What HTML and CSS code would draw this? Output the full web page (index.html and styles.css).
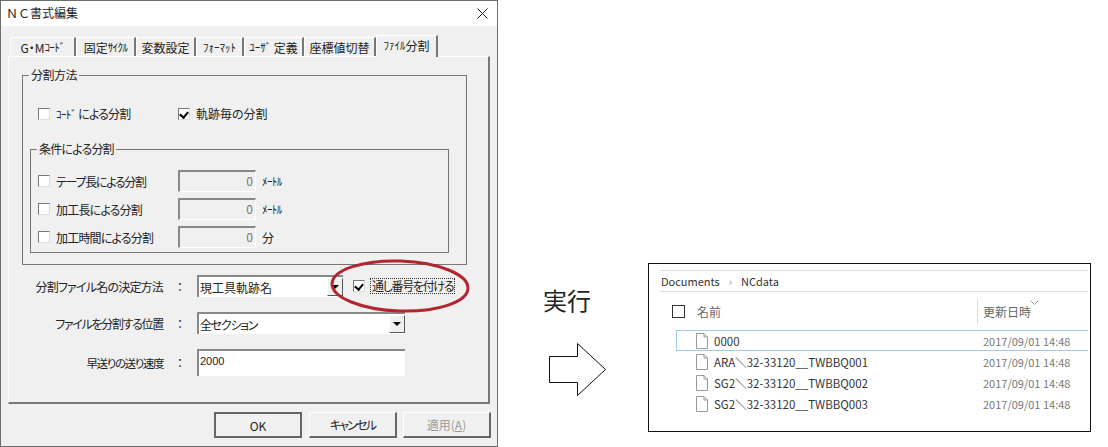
FILE: index.html
```html
<!DOCTYPE html>
<html lang="ja">
<head>
    <meta charset="UTF-8">
    <title>NC書式編集</title>
    <link rel="stylesheet" href="styles.css">
</head>
<body>
    <div class="dialog">
        <div class="titlebar">
            <span class="title">ＮＣ書式編集</span>
            <svg class="close" width="11" height="11" viewBox="0 0 11 11"><path d="M0.5 0.5L10.5 10.5M10.5 0.5L0.5 10.5" stroke="#222" fill="none"/></svg>
        </div>
        <div class="dialog-body">
            <div class="tabs">
                <div class="tab tab-gm">G・M<span class="narrow">ｺｰﾄﾞ</span></div>
                <div class="tab tab-cycle">固定<span class="narrow">ｻｲｸﾙ</span></div>
                <div class="tab tab-var">変数設定</div>
                <div class="tab tab-format"><span class="narrow wide-kana">ﾌｫｰﾏｯﾄ</span></div>
                <div class="tab tab-user"><span class="narrow wide-kana">ﾕｰｻﾞ</span> 定義</div>
                <div class="tab tab-coord">座標値切替</div>
                <div class="tab tab-active"><span class="narrow wide-kana">ﾌｧｲﾙ</span>分割</div>
            </div>
            <div class="panel">
                <fieldset class="group group-method">
                    <legend class="tight-0">分割方法</legend>
                    <div class="check-row">
                        <label class="check check-code"><span class="box"></span><span class="tight-1"><span class="narrow">ｺｰﾄﾞ</span> による分割</span></label>
                        <label class="check"><span class="box checked"></span><span>軌跡毎の分割</span></label>
                    </div>
                    <fieldset class="group group-cond">
                        <legend class="tight-1">条件による分割</legend>
                        <div class="cond-row">
                            <label class="check cond-label"><span class="box"></span><span class="tight-2">テープ長による分割</span></label>
                            <div class="num">0</div><span class="unit narrow">ﾒｰﾄﾙ</span>
                        </div>
                        <div class="cond-row">
                            <label class="check cond-label"><span class="box"></span><span class="tight-1">加工長による分割</span></label>
                            <div class="num">0</div><span class="unit narrow">ﾒｰﾄﾙ</span>
                        </div>
                        <div class="cond-row">
                            <label class="check cond-label"><span class="box"></span><span class="tight-1">加工時間による分割</span></label>
                            <div class="num">0</div><span class="unit">分</span>
                        </div>
                    </fieldset>
                </fieldset>
                <div class="form-row row-name">
                    <span class="form-label tight-1">分割ファイル名の決定方法</span><span class="colon">：</span>
                    <div class="combo combo-short"><span>現工具軌跡名</span><span class="arrow-btn"><i></i></span></div>
                    <label class="check check-serial"><span class="box checked"></span><span class="focus-text tight-2">通し番号を付ける</span></label>
                </div>
                <div class="form-row row-pos">
                    <span class="form-label tight-2">ファイルを分割する位置</span><span class="colon">：</span>
                    <div class="combo combo-long"><span class="tight-2">全セクション</span><span class="arrow-btn"><i></i></span></div>
                </div>
                <div class="form-row row-speed">
                    <span class="form-label tight-4">早送りの送り速度</span><span class="colon">：</span>
                    <div class="speed-input">2000</div>
                </div>
                <svg class="ring" width="142" height="56" viewBox="0 0 142 56"><ellipse cx="71" cy="28" rx="68" ry="25" transform="rotate(2 71 28)" fill="none" stroke="#b2262f" stroke-width="3"/></svg>
            </div>
            <div class="buttons">
                <div class="btn btn-default">OK</div>
                <div class="btn tight-3">キャンセル</div>
                <div class="btn btn-off">適用(<u>A</u>)</div>
            </div>
        </div>
    </div>

    <div class="middle">
        <div class="run-label">実行</div>
        <svg class="big-arrow" width="58" height="54" viewBox="0 0 58 54"><path d="M0.5 13.5H28.5V0.5L56.5 26.5L28.5 52.5V39.5H0.5Z" fill="#fff" stroke="#111"/></svg>
    </div>

    <div class="explorer">
        <div class="breadcrumb"><span>Documents</span><span class="crumb-sep">›</span><span>NCdata</span></div>
        <div class="list-head">
            <span class="head-box"></span>
            <span class="head-name">名前</span>
            <span class="head-date">更新日時<svg class="sort" width="9" height="5" viewBox="0 0 9 5"><path d="M0.5 0.5L4.5 4.5L8.5 0.5" stroke="#999" fill="none"/></svg></span>
        </div>
        <div class="file file-selected">
            <svg class="doc" width="12" height="16" viewBox="0 0 12 16"><path d="M0.5 0.5H8L11.5 4V15.5H0.5ZM8 0.5V4H11.5" fill="#fff" stroke="#999"/></svg>
            <span class="file-name">0000</span><span class="file-date">2017/09/01 14:48</span>
        </div>
        <div class="file">
            <svg class="doc" width="12" height="16" viewBox="0 0 12 16"><path d="M0.5 0.5H8L11.5 4V15.5H0.5ZM8 0.5V4H11.5" fill="#fff" stroke="#999"/></svg>
            <span class="file-name">ARA＼32-33120__TWBBQ001</span><span class="file-date">2017/09/01 14:48</span>
        </div>
        <div class="file">
            <svg class="doc" width="12" height="16" viewBox="0 0 12 16"><path d="M0.5 0.5H8L11.5 4V15.5H0.5ZM8 0.5V4H11.5" fill="#fff" stroke="#999"/></svg>
            <span class="file-name">SG2＼32-33120__TWBBQ002</span><span class="file-date">2017/09/01 14:48</span>
        </div>
        <div class="file">
            <svg class="doc" width="12" height="16" viewBox="0 0 12 16"><path d="M0.5 0.5H8L11.5 4V15.5H0.5ZM8 0.5V4H11.5" fill="#fff" stroke="#999"/></svg>
            <span class="file-name">SG2＼32-33120__TWBBQ003</span><span class="file-date">2017/09/01 14:48</span>
        </div>
    </div>
</body>
</html>
```

FILE: styles.css
```css
* {
    box-sizing: border-box;
}
body {
    margin: 0;
    width: 1108px;
    height: 447px;
    overflow: hidden;
    background-color: #fff;
    display: flex;
    align-items: flex-start;
    font-family: "Noto Sans CJK JP", "Liberation Sans", sans-serif;
    font-size: 12px;
    color: #222;
}
.narrow {
    font-size: 11px;
    letter-spacing: -0.6px;
}
.wide-kana {
    letter-spacing: 0;
}
.tight-0 { letter-spacing: -0.5px; }
.tight-1 { letter-spacing: -0.8px; }
.tight-2 { letter-spacing: -1.3px; }
.tight-3 { letter-spacing: -1.8px; }
.tight-4 { letter-spacing: -1.4px; font-size: 11.5px; }

/* dialog */
.dialog {
    width: 498px;
    height: 447px;
    border: 1px solid #6d6d6d;
    background-color: #f0f0f0;
    flex-shrink: 0;
}
.titlebar {
    height: 25px;
    background-color: #fff;
    display: flex;
    align-items: center;
    justify-content: space-between;
    padding: 0 9px 0 5px;
}
.title {
    margin-top: -2px;
}
.dialog-body {
    padding: 8px 6px 0 7px;
    font-feature-settings: "palt";
}
.tabs {
    display: flex;
    height: 22px;
    padding-left: 2px;
    align-items: flex-end;
    position: relative;
    z-index: 1;
}
.tab {
    height: 19px;
    border: 1px solid #fff;
    border-right: 2px solid #777;
    border-bottom: none;
    background-color: #f0f0f0;
    display: flex;
    align-items: center;
    justify-content: center;
    white-space: pre;
}
.tab-gm { width: 66px; }
.tab-cycle { width: 60px; }
.tab-var { width: 60px; }
.tab-format { width: 48px; }
.tab-user { width: 60px; }
.tab-coord { width: 72px; }
.tab-active {
    width: 62px;
    height: 22px;
    margin-bottom: -1px;
    padding-bottom: 3px;
}
.panel {
    position: relative;
    width: 482px;
    height: 348px;
    border: 1px solid #fff;
    border-right: 2px solid #777;
    border-bottom: 2px solid #777;
    padding: 11px 0 0 13px;
}

/* groups */
.group {
    margin: 0;
    padding: 0;
    border: 1px solid #777;
}
.group legend {
    margin-left: -1px;
    padding: 0 2px;
    line-height: 14px;
}
.group-method {
    width: 445px;
    height: 197px;
    padding: 23px 0 0 7px;
}
.check-row {
    display: flex;
    padding-left: 8px;
}
.check {
    display: flex;
    align-items: center;
    gap: 6px;
    white-space: nowrap;
}
.check-code {
    width: 140px;
}
.box {
    width: 12px;
    height: 12px;
    background-color: #fff;
    border: 1px solid #777;
    border-right-color: #ddd;
    border-bottom-color: #ddd;
    flex-shrink: 0;
    position: relative;
}
.box.checked::after {
    content: "";
    position: absolute;
    left: 2px;
    top: 1px;
    width: 4px;
    height: 6px;
    border: solid #000;
    border-width: 0 2px 2px 0;
    transform: rotate(40deg);
}
.group-cond {
    width: 419px;
    height: 111px;
    margin-top: 20px;
    padding: 14px 0 0 7px;
}
.cond-row {
    display: flex;
    align-items: center;
    height: 22px;
    margin-bottom: 6px;
}
.cond-label {
    width: 140px;
}
.num {
    width: 78px;
    height: 22px;
    background-color: #f0f0f0;
    border: 1px solid #fff;
    border-top: 2px solid #888;
    border-left: 2px solid #888;
    color: #777;
    text-align: right;
    padding-right: 2px;
    line-height: 18px;
}
.unit {
    margin-left: 6px;
}

/* form rows */
.form-row {
    display: flex;
    align-items: center;
}
.row-name {
    margin-top: 10px;
    height: 22px;
}
.row-pos {
    margin-top: 15px;
    height: 22px;
}
.row-speed {
    margin-top: 15px;
    height: 27px;
}
.form-label {
    width: 141px;
    text-align: right;
    white-space: nowrap;
}
.colon {
    width: 34px;
    text-align: center;
}
.combo {
    height: 22px;
    background-color: #fff;
    border-top: 2px solid #888;
    border-left: 2px solid #888;
    display: flex;
    align-items: center;
    justify-content: space-between;
    padding-left: 1px;
}
.combo-short { width: 146px; }
.combo-long { width: 208px; }
.arrow-btn {
    width: 16px;
    height: 18px;
    background-color: #f0f0f0;
    border: 1px solid #fff;
    border-right-color: #555;
    border-bottom-color: #555;
    display: flex;
    align-items: center;
    justify-content: center;
}
.arrow-btn i {
    width: 0;
    height: 0;
    border: 4px solid transparent;
    border-top: 4px solid #000;
    border-bottom: none;
}
.check-serial {
    margin-left: 10px;
    gap: 5px;
}
.focus-text {
    border: 1px dotted #333;
    padding: 0 1px;
    line-height: 14px;
}
.speed-input {
    width: 208px;
    height: 27px;
    background-color: #fff;
    border-top: 2px solid #888;
    border-left: 2px solid #888;
    padding: 2px 0 0 1px;
    font-family: "Liberation Sans", sans-serif;
    font-size: 11px;
    line-height: 16px;
}
.ring {
    position: absolute;
    left: 320px;
    top: 201px;
}

/* bottom buttons */
.buttons {
    display: flex;
    justify-content: flex-end;
    gap: 6px;
    margin-top: 8px;
}
.btn {
    width: 88px;
    height: 26px;
    background-color: #f0f0f0;
    border: 1px solid #fff;
    border-right: 2px solid #666;
    border-bottom: 2px solid #666;
    display: flex;
    align-items: center;
    justify-content: center;
}
.btn-default {
    border: 2px solid #666;
    margin-right: 1px;
}
.btn-off {
    color: #999;
}

/* middle */
.middle {
    width: 150px;
    padding: 286px 0 0 45px;
    flex-shrink: 0;
}
.run-label {
    font-size: 24px;
    line-height: 28px;
}
.big-arrow {
    display: block;
    margin: 29px 0 0 6px;
}

/* explorer */
.explorer {
    margin-top: 263px;
    width: 443px;
    height: 169px;
    border: 1px solid #111;
    padding: 6px 2px 0 11px;
    font-size: 11px;
}
.breadcrumb {
    height: 22px;
    border-top: 1px solid #ddd;
    border-bottom: 1px solid #ddd;
    display: flex;
    align-items: center;
    gap: 9px;
    padding-left: 1px;
    color: #333;
}
.crumb-sep {
    color: #888;
}
.list-head {
    height: 38px;
    display: flex;
    align-items: center;
    color: #666;
    font-size: 12px;
}
.head-box {
    width: 13px;
    height: 13px;
    border: 1px solid #333;
    margin-left: 12px;
}
.head-name {
    margin-left: 12px;
    width: 280px;
}
.head-date {
    border-left: 1px solid #ddd;
    height: 25px;
    padding-left: 5px;
    display: flex;
    align-items: center;
    position: relative;
}
.sort {
    position: absolute;
    right: -8px;
    top: 1px;
}
.file {
    height: 21px;
    display: flex;
    align-items: center;
    padding-left: 36px;
    color: #333;
}
.file-selected {
    border: 1px solid #9fcbe3;
    border-right: none;
    margin-left: 16px;
    padding-left: 19px;
}
.doc {
    flex-shrink: 0;
}
.file-name {
    margin-left: 6px;
    width: 269px;
    font-size: 11.5px;
    white-space: nowrap;
}
.file-date {
    color: #777;
}
```
